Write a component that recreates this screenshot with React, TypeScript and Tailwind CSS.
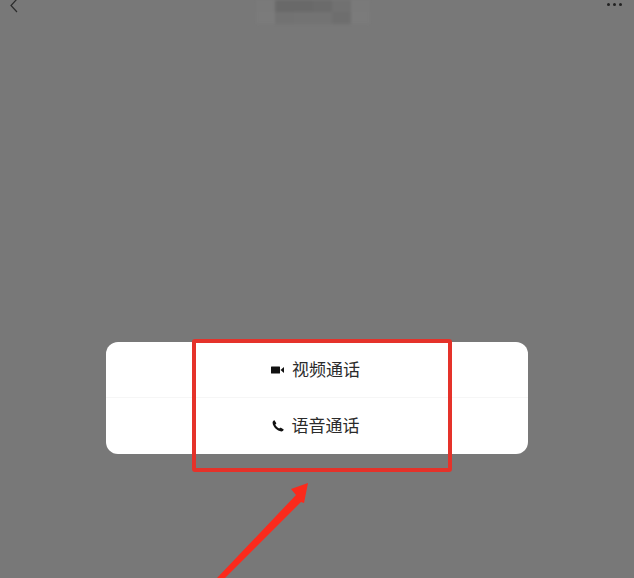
const mosaic = [
  ['bg-[#7a7a7a]', 'bg-[#696969]', 'bg-[#696969]', 'bg-[#6b6b6b]', 'bg-[#717171]', 'bg-[#7a7a7a]'],
  ['bg-[#7b7b7b]', 'bg-[#727272]', 'bg-[#737373]', 'bg-[#737373]', 'bg-[#6e6e6e]', 'bg-[#7b7b7b]'],
];

const VideoIcon = () => (
  <svg width="13" height="8" viewBox="0 0 13 8" className="shrink-0">
    <rect x="0" y="0.5" width="9" height="7" rx="0.5" fill="#111" />
    <path d="M9.5 4 13 1v6z" fill="#111" />
  </svg>
);

const PhoneIcon = () => (
  <svg width="12" height="12" viewBox="0 0 12 12" className="shrink-0">
    <path
      d="M2.6 0.4 4.200 3c.2.3.1.6-.1.8l-.8.8c.6 1.500 2.100 3.200 3.900 4l.9-.8c.2-.2.5-.2.8-.1l2.500 1.500c.3.2.4.5.2.8-.5.9-1.300 1.500-2.200 1.400C5 11.100 1 6.800.6 3 .5 2 1 1.100 1.800.5c.3-.2.6-.3.8-.1z"
      fill="#111"
    />
  </svg>
);

const Row = ({ icon, label, rowClass, labelClass }: { icon: React.ReactNode; label: string; rowClass: string; labelClass: string }) => (
  <div className={`${rowClass} flex items-center justify-center gap-[8px] pr-[3px]`}>
    {icon}
    <span className={`${labelClass} text-[17px] leading-none text-[#2b2b2b]`}>{label}</span>
  </div>
);

export default function App() {
  return (
    <div
      className="relative h-[578px] w-[634px] overflow-hidden bg-[#787878]"
      style={{ fontFamily: '"Noto Sans CJK SC", "Noto Sans", sans-serif' }}
    >
      <div className="flex h-[342px] items-start justify-between pl-[9px] pr-[12px]">
        <svg width="10" height="14" viewBox="0 0 10 14" className="shrink-0">
          <path d="M8 -1 2 5.500 8 12" fill="none" stroke="#2c2c2c" strokeWidth="1.200" />
        </svg>

        <div className="grid h-[24px] w-[114px] grid-cols-6 blur-[1.5px]">
          {mosaic.flat().map((c, i) => (
            <div key={i} className={c} />
          ))}
        </div>

        <div className="mt-[3px] flex gap-[3px]">
          <div className="h-[3px] w-[3px] rounded-full bg-[#222]" />
          <div className="h-[3px] w-[3px] rounded-full bg-[#222]" />
          <div className="h-[3px] w-[3px] rounded-full bg-[#222]" />
        </div>
      </div>

      <div className="ml-[106px] w-[422px] rounded-[12px] bg-white">
        <div className="border-b border-[#f6f6f6]">
          <Row icon={<VideoIcon />} label="视频通话" rowClass="h-[55px]" labelClass="mb-[2px]" />
        </div>
        <Row icon={<PhoneIcon />} label="语音通话" rowClass="h-[56px]" labelClass="mb-[4px]" />
      </div>

      {/* annotation on top of the screenshot */}
      <div className="absolute left-[192px] top-[339px] h-[133px] w-[260px] rounded-[3px] border-[4px] border-[#e5322a]" />
      <svg width="634" height="578" viewBox="0 0 634 578" className="absolute left-0 top-0">
        <path d="M308 483 291 489 296 495 217 578 225 578 301 502 304 503z" fill="#fb2a1c" />
      </svg>
    </div>
  );
}
